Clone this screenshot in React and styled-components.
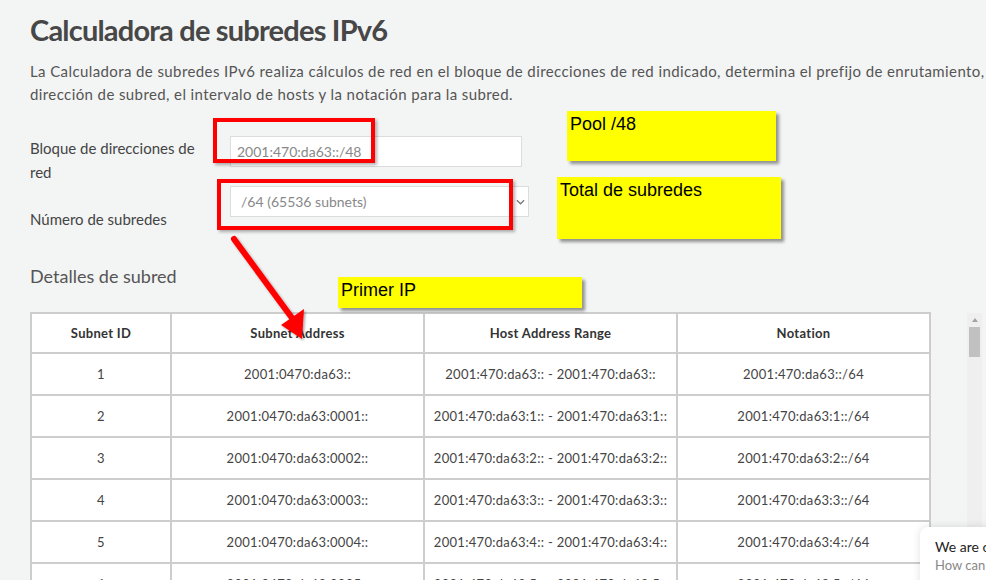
import React from 'react';
import styled, {createGlobalStyle} from 'styled-components';

const Global = createGlobalStyle`
  body {
    margin: 0;
    background: #f3f4f4;
    overflow: hidden;
    font-family: Lato, "Open Sans", sans-serif;
  }
`;

const rows = [0, 1, 2, 3, 4, 5].map((n) => {
    const hex = n === 0 ? '' : n.toString(16);
    const pad = n === 0 ? '' : ':' + n.toString(16).padStart(4, '0');
    const net = n === 0 ? '2001:470:da63::' : `2001:470:da63:${hex}::`;
    return {
        id: n + 1,
        address: `2001:0470:da63${pad}::`,
        range: `${net} - ${net}`,
        notation: `${net}/64`
    };
});

const App = () => {
    return (
        <Page>
            <Global/>
            <Title>Calculadora de subredes IPv6</Title>
            <Intro>
                <span>La Calculadora de subredes IPv6 realiza cálculos de red en el bloque de direcciones de red indicado, determina el prefijo de enrutamiento, la</span>
                <span>dirección de subred, el intervalo de hosts y la notación para la subred.</span>
            </Intro>

            <Form>
                <Row>
                    <Label>Bloque de direcciones de red</Label>
                    <Input defaultValue="2001:470:da63::/48" readOnly/>
                </Row>
                <Row>
                    <Label offset={21}>Número de subredes</Label>
                    <SelectWrap>
                        <Select defaultValue="64">
                            <option value="64">/64 (65536 subnets)</option>
                        </Select>
                        <Chevron viewBox="0 0 10 6">
                            <path d="M1 1l4 4 4-4" fill="none" stroke="#777" strokeWidth="1.4"/>
                        </Chevron>
                    </SelectWrap>
                </Row>
            </Form>

            <Subtitle>Detalles de subred</Subtitle>

            <TableArea>
                <Table>
                    <colgroup>
                        <col style={{width: 140}}/>
                        <col style={{width: 253}}/>
                        <col style={{width: 253}}/>
                        <col style={{width: 253}}/>
                    </colgroup>
                    <thead>
                    <tr>
                        <Th>Subnet ID</Th>
                        <Th>Subnet Address</Th>
                        <Th>Host Address Range</Th>
                        <Th>Notation</Th>
                    </tr>
                    </thead>
                    <tbody>
                    {rows.map((r) => (
                        <tr key={r.id}>
                            <Td>{r.id}</Td>
                            <Td>{r.address}</Td>
                            <Td>{r.range}</Td>
                            <Td>{r.notation}</Td>
                        </tr>
                    ))}
                    </tbody>
                </Table>
                <Scrollbar>
                    <ScrollArrow/>
                    <ScrollThumb/>
                </Scrollbar>
            </TableArea>

            <Chat>
                <ChatTitle>We are online!</ChatTitle>
                <ChatText>How can we help you?</ChatText>
            </Chat>

            <RedBox x={213} y={118} w={162} h={45}/>
            <RedBox x={217} y={179} w={296} h={51}/>

            <Note x={567} y={111} w={209} h={50}>Pool /48</Note>
            <Note x={557} y={177} w={224} h={62}>Total de subredes</Note>
            <Note x={338} y={277} w={244} h={31}>Primer IP</Note>

            <Arrow viewBox="0 0 986 580">
                <defs>
                    <filter id="sh" x="-20%" y="-20%" width="140%" height="140%">
                        <feDropShadow dx="1.5" dy="1.5" stdDeviation="1" floodColor="#000" floodOpacity="0.35"/>
                    </filter>
                </defs>
                <g filter="url(#sh)">
                    <line x1="234" y1="239" x2="292" y2="318" stroke="#ff0000" strokeWidth="6" strokeLinecap="round"/>
                    <polygon points="281,325 304,309 302,339" fill="#ff0000"/>
                </g>
            </Arrow>
        </Page>
    );
};

export default App;

const Page = styled.div`
  position: relative;
  width: 986px;
  height: 580px;
  overflow: hidden;
  padding: 12px 0 0 30px;
  box-sizing: border-box;
`;

const Title = styled.h1`
  margin: 0;
  font-size: 29px;
  line-height: 36px;
  font-weight: 700;
  color: #474747;
  letter-spacing: -0.8px;
`;

const Intro = styled.p`
  margin: 12px 0 0;
  font-size: 15px;
  line-height: 23px;
  letter-spacing: 0.4px;
  color: #555;
  display: flex;
  flex-direction: column;
  white-space: nowrap;
`;

const Form = styled.div`
  margin-top: 30px;
  display: flex;
  flex-direction: column;
  gap: 2px;
`;

const Row = styled.div`
  display: flex;
  align-items: flex-start;
`;

const Label = styled.div`
  width: 175px;
  margin-right: 25px;
  padding-top: ${(p) => p.offset || 0}px;
  font-size: 15px;
  line-height: 24px;
  color: #444;
`;

const Input = styled.input`
  width: 292px;
  height: 31px;
  box-sizing: border-box;
  border: 1px solid #dcdcdc;
  background: #fff;
  padding: 0 6px;
  font-family: Lato, sans-serif;
  font-size: 14px;
  color: #888;
  outline: none;
`;

const SelectWrap = styled.div`
  position: relative;
  width: 299px;
  height: 31px;
`;

const Select = styled.select`
  appearance: none;
  width: 100%;
  height: 100%;
  box-sizing: border-box;
  border: 1px solid #dcdcdc;
  border-radius: 0;
  background: #fff;
  padding: 0 10px;
  font-family: Lato, sans-serif;
  font-size: 14px;
  color: #888;
  outline: none;
`;

const Chevron = styled.svg`
  position: absolute;
  right: 4px;
  top: 13px;
  width: 9px;
  height: 6px;
`;

const Subtitle = styled.h2`
  margin: 33px 0 0;
  font-size: 18px;
  line-height: 24px;
  font-weight: 400;
  color: #555;
`;

const TableArea = styled.div`
  margin-top: 24px;
  display: flex;
  align-items: stretch;
  height: 300px;
`;

const Table = styled.table`
  width: 899px;
  border-collapse: collapse;
  table-layout: fixed;
  background: #fff;
  align-self: flex-start;
`;

const Th = styled.th`
  height: 38px;
  padding: 0;
  border: 2px solid #cdcdcd;
  font-size: 13px;
  font-weight: 700;
  letter-spacing: 0.3px;
  color: #333;
  text-align: center;
`;

const Td = styled.td`
  height: 40px;
  padding: 0;
  border: 2px solid #cdcdcd;
  font-size: 13px;
  letter-spacing: 0.3px;
  color: #444;
  text-align: center;
  white-space: nowrap;
`;

const Scrollbar = styled.div`
  margin-left: 36px;
  margin-top: 1px;
  width: 15px;
  background: #efefef;
  display: flex;
  flex-direction: column;
  align-items: center;
`;

const ScrollArrow = styled.div`
  margin-top: 5px;
  width: 0;
  height: 0;
  border-left: 3.5px solid transparent;
  border-right: 3.5px solid transparent;
  border-bottom: 4px solid #a3a3a3;
`;

const ScrollThumb = styled.div`
  margin-top: 5px;
  width: 11px;
  height: 30px;
  background: #c1c1c1;
`;

const Chat = styled.div`
  position: absolute;
  left: 920px;
  top: 527px;
  width: 260px;
  height: 80px;
  background: #fff;
  border-radius: 8px 0 0 0;
  box-shadow: 0 0 8px rgba(0, 0, 0, 0.12);
  padding: 11px 0 0 15px;
  box-sizing: border-box;
  white-space: nowrap;
`;

const ChatTitle = styled.div`
  font-size: 14px;
  line-height: 18px;
  color: #222;
`;

const ChatText = styled.div`
  font-size: 13px;
  line-height: 18px;
  color: #888;
`;

const RedBox = styled.div`
  position: absolute;
  left: ${(p) => p.x}px;
  top: ${(p) => p.y}px;
  width: ${(p) => p.w}px;
  height: ${(p) => p.h}px;
  box-sizing: border-box;
  border: 4px solid #ff0000;
  box-shadow: 2px 2px 3px rgba(0, 0, 0, 0.3);
`;

const Note = styled.div`
  position: absolute;
  left: ${(p) => p.x}px;
  top: ${(p) => p.y}px;
  width: ${(p) => p.w}px;
  height: ${(p) => p.h}px;
  box-sizing: border-box;
  background: #ffff00;
  box-shadow: 3px 3px 3px rgba(0, 0, 0, 0.4);
  padding: 2px 3px;
  font-family: "Liberation Sans", Arial, sans-serif;
  font-size: 18px;
  line-height: 22px;
  color: #000;
`;

const Arrow = styled.svg`
  position: absolute;
  left: 0;
  top: 0;
  width: 986px;
  height: 580px;
  pointer-events: none;
`;
